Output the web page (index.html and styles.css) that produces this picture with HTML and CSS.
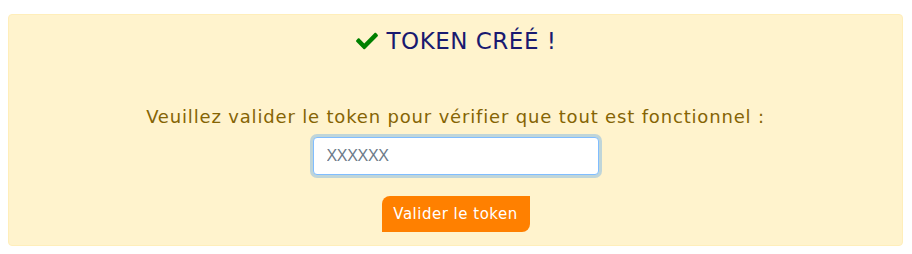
FILE: index.html
```html
<!DOCTYPE html>
<html lang="fr">
<head>
<meta charset="utf-8">
<title>Token créé</title>
<link rel="stylesheet" href="styles.css">
</head>
<body>
<div class="alert">
  <div class="title">
    <svg class="check" viewBox="0 0 512 512" aria-hidden="true"><path d="M173.898 439.404l-166.4-166.4c-9.997-9.997-9.997-26.206 0-36.204l36.203-36.204c9.997-9.998 26.207-9.998 36.204 0L192 312.69 432.095 72.596c9.997-9.997 26.207-9.997 36.204 0l36.203 36.204c9.997 9.997 9.997 26.206 0 36.204l-294.4 294.401c-9.998 9.997-26.207 9.997-36.204-.001z"/></svg>
    <span>TOKEN CRÉÉ !</span>
  </div>
  <p class="message">Veuillez valider le token pour vérifier que tout est fonctionnel :</p>
  <input class="token" type="text" placeholder="XXXXXX" autofocus>
  <button class="submit" type="button">Valider le token</button>
</div>
</body>
</html>
```

FILE: styles.css
```css
html, body {
  margin: 0;
  padding: 0;
  background: #ffffff;
}
body {
  padding: 14px 9px 0 8px;
  font-family: "DejaVu Sans", "Open Sans", sans-serif;
}
.alert {
  box-sizing: border-box;
  height: 232px;
  background: #fff3cd;
  border: 1px solid #ffeeba;
  border-radius: 4px;
  padding: 11px 0 0;
  display: flex;
  flex-direction: column;
  align-items: center;
}
.title {
  display: flex;
  align-items: center;
  gap: 8px;
  height: 30px;
  color: #191970;
  font-size: 23px;
  letter-spacing: 0.5px;
}
.check {
  width: 24px;
  height: 22px;
  fill: #008000;
}
.message {
  margin: 49px 0 0;
  height: 24px;
  line-height: 24px;
  font-size: 18px;
  color: #856404;
  letter-spacing: 0.83px;
}
.token {
  box-sizing: border-box;
  margin-top: 8px;
  width: 286px;
  height: 38px;
  padding: 0 12px 0 13px;
  border: 1px solid #80bdff;
  border-radius: 4px;
  box-shadow: 0 0 0 3px rgba(0, 123, 255, 0.25);
  outline: none;
  background: #ffffff;
  font-family: "Liberation Sans", Arial, sans-serif;
  font-size: 16px;
  letter-spacing: -0.3px;
  color: #495057;
  caret-color: #222222;
}
.token::placeholder {
  color: #6c7a89;
}
.submit {
  margin-top: 21px;
  width: 148px;
  height: 36px;
  border: none;
  border-radius: 8px 0 8px 0;
  background: #ff8000;
  color: #ffffff;
  font-family: "DejaVu Sans", "Open Sans", sans-serif;
  font-size: 15px;
  letter-spacing: 0.5px;
  padding: 0;
}
```
